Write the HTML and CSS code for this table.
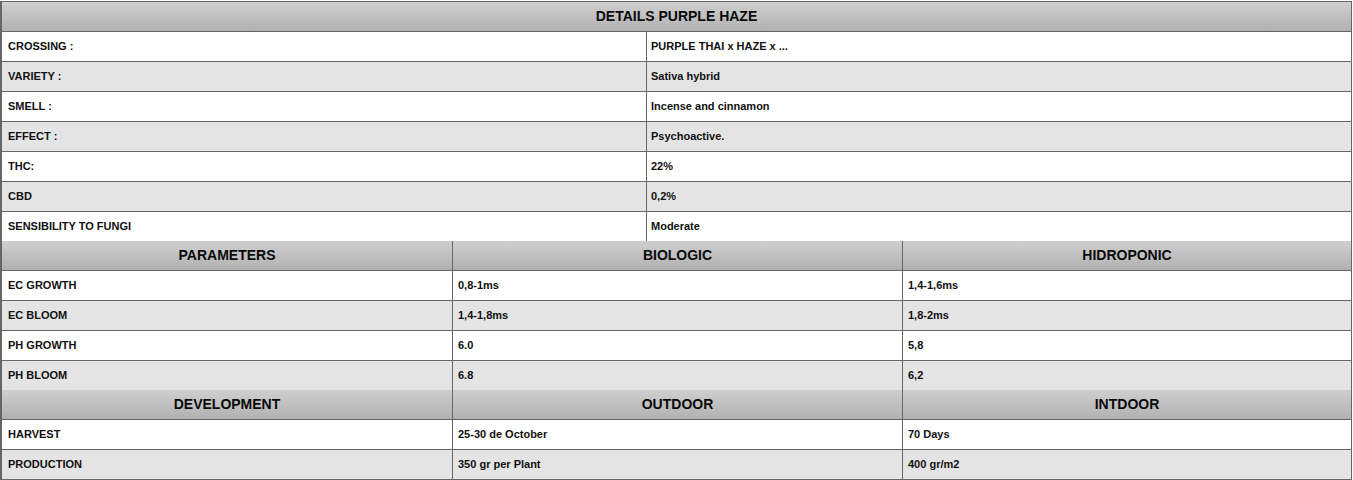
FILE: index.html
```html
<!DOCTYPE html>
<html>
<head>
<meta charset="utf-8">
<link rel="stylesheet" href="styles.css">
</head>
<body>
<div class="sheet">
  <div class="grid two">
    <div class="head span2">DETAILS PURPLE HAZE</div>
    <div class="cell">CROSSING :</div><div class="cell sep">PURPLE THAI x HAZE x ...</div>
    <div class="cell alt">VARIETY :</div><div class="cell alt sep">Sativa hybrid</div>
    <div class="cell">SMELL :</div><div class="cell sep">Incense and cinnamon</div>
    <div class="cell alt">EFFECT :</div><div class="cell alt sep">Psychoactive.</div>
    <div class="cell">THC:</div><div class="cell sep">22%</div>
    <div class="cell alt">CBD</div><div class="cell alt sep">0,2%</div>
    <div class="cell last">SENSIBILITY TO FUNGI</div><div class="cell sep last">Moderate</div>
  </div>
  <div class="grid three">
    <div class="head">PARAMETERS</div><div class="head sep">BIOLOGIC</div><div class="head sep">HIDROPONIC</div>
    <div class="cell">EC GROWTH</div><div class="cell sep">0,8-1ms</div><div class="cell sep">1,4-1,6ms</div>
    <div class="cell alt">EC BLOOM</div><div class="cell alt sep">1,4-1,8ms</div><div class="cell alt sep">1,8-2ms</div>
    <div class="cell">PH GROWTH</div><div class="cell sep">6.0</div><div class="cell sep">5,8</div>
    <div class="cell alt last">PH BLOOM</div><div class="cell alt sep last">6.8</div><div class="cell alt sep last">6,2</div>
  </div>
  <div class="grid three">
    <div class="head">DEVELOPMENT</div><div class="head sep">OUTDOOR</div><div class="head sep">INTDOOR</div>
    <div class="cell">HARVEST</div><div class="cell sep">25-30 de October</div><div class="cell sep">70 Days</div>
    <div class="cell alt last">PRODUCTION</div><div class="cell alt sep last">350 gr per Plant</div><div class="cell alt sep last">400 gr/m2</div>
  </div>
</div>
</body>
</html>
```

FILE: styles.css
```css
html, body {
  margin: 0;
  padding: 0;
  background: #ffffff;
}
body {
  padding-top: 1px;
  font-family: "Liberation Sans", Arial, sans-serif;
  color: #111111;
}
.sheet {
  box-sizing: border-box;
  width: 1352px;
  border: 1px solid #666666;
  border-left-width: 2px;
}
.grid {
  display: grid;
}
.two {
  grid-template-columns: 644px 1fr;
}
.three {
  grid-template-columns: 450px 450px 1fr;
}
.span2 {
  grid-column: 1 / span 2;
}
.head {
  box-sizing: border-box;
  height: 30px;
  padding-bottom: 2px;
  border-bottom: 1px solid #666666;
  background: linear-gradient(to bottom, #cfcfcf, #b1b1b1);
  font-size: 14px;
  font-weight: bold;
  color: #0a0a0a;
  display: flex;
  align-items: center;
  justify-content: center;
}
.cell {
  box-sizing: border-box;
  height: 30px;
  padding-bottom: 2px;
  border-bottom: 1px solid #666666;
  background: #ffffff;
  font-size: 11px;
  font-weight: bold;
  display: flex;
  align-items: center;
  padding-left: 6px;
  white-space: nowrap;
}
.cell.sep {
  padding-left: 4px;
}
.three .cell.sep {
  padding-left: 5px;
}
.cell.alt {
  background: #e4e4e4;
}
.cell.last {
  height: 29px;
  padding-bottom: 1px;
  border-bottom: none;
}
.sep {
  border-left: 1px solid #666666;
}
```
